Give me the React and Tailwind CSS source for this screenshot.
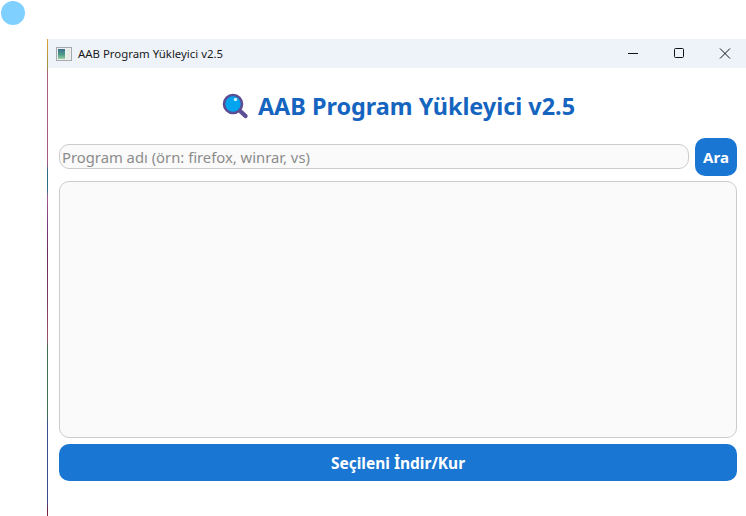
import React from 'react';

const uiFont = "font-['Noto_Sans','Open_Sans',sans-serif]";

const SearchGlyph = () => (
  <svg width="28" height="28" viewBox="0 0 28 28" className="shrink-0">
    <line x1="16.5" y1="16.5" x2="23.5" y2="23" stroke="#5c4d94" strokeWidth="4.4" strokeLinecap="round" />
    <circle cx="11" cy="11" r="9" fill="#00a4ef" stroke="#5c4d94" strokeWidth="2.6" />
    <circle cx="13.5" cy="6.5" r="1.8" fill="#c9eefc" />
  </svg>
);

const AppIcon = () => (
  <svg width="16" height="14" viewBox="0 0 16 14">
    <defs>
      <linearGradient id="appIconFill" x1="0" y1="0" x2="0" y2="1">
        <stop offset="0" stopColor="#3d6f8f" />
        <stop offset="0.6" stopColor="#4f9f8a" />
        <stop offset="1" stopColor="#9fd0a0" />
      </linearGradient>
    </defs>
    <rect x="0.5" y="0.5" width="15" height="13" fill="#eeeeee" stroke="#a3a9ad" />
    <rect x="2" y="2" width="7" height="10" fill="url(#appIconFill)" />
    <rect x="10" y="2" width="4" height="10" fill="#e6ede6" />
  </svg>
);

const TitleBar = () => (
  <div className="flex h-[29px] items-center bg-[#eef3fa] pl-[8px]">
    <AppIcon />
    <span className="ml-[6px] font-['Noto_Sans',sans-serif] text-[11.4px] leading-none text-[#1a1a1a]">AAB Program Yükleyici v2.5</span>
    <div className="ml-auto mr-[-2px] flex items-center">
      <svg width="46" height="29" viewBox="0 0 46 29">
        <line x1="18" y1="14.5" x2="28" y2="14.5" stroke="#111" />
      </svg>
      <svg width="46" height="29" viewBox="0 0 46 29">
        <rect x="18.5" y="9.5" width="9" height="9" rx="1" fill="none" stroke="#111" />
      </svg>
      <svg width="46" height="29" viewBox="0 0 46 29">
        <path d="M18 9.5 L28 19.5 M28 9.5 L18 19.5" stroke="#111" />
      </svg>
    </div>
  </div>
);

export default function App() {
  return (
    <div className={`relative h-[516px] w-[746px] overflow-hidden bg-white ${uiFont}`}>
      <div className="absolute left-[1px] top-[1px] h-[24px] w-[24px] rounded-full bg-[#80d0ff]" />
      <div className="absolute left-[47px] top-[39px] h-[477px] w-[699px] overflow-hidden bg-white pl-[1px]">
        {/* wallpaper showing through the window's left edge */}
        <div className="absolute top-0 bottom-0 left-0 w-[1px] bg-[linear-gradient(to_bottom,#e0a030_0px,#a09040_28px,#a8607f_34px,#a05a80_125px,#2a6a85_132px,#2a6a85_150px,#a05a90_158px,#7a3a80_185px,#6a2a60_215px,#7a3a60_265px,#a0506a_300px,#3f7050_308px,#3f7050_375px,#3a5090_384px,#3a4a90_462px,#7a2040_472px)]" />
        <TitleBar />
        <div className="flex flex-col px-[11px] pr-[9px]">
          <div className="flex h-[70px] items-center justify-center gap-[8px] pt-[7px] pl-[1px]">
            <SearchGlyph />
            <h1 className="text-[23.4px] leading-none font-bold text-[#1565c0]">AAB Program Yükleyici v2.5</h1>
          </div>
          <div className="flex items-center gap-[6px]">
            <input
              readOnly
              placeholder="Program adı (örn: firefox, winrar, vs)"
              className="mb-[1px] h-[25px] min-w-0 flex-1 rounded-[10px] border border-[#cccccc] bg-[#fafafa] px-[2px] text-[14.8px] outline-none placeholder:text-[#8c8c8c]"
            />
            <button className="h-[38px] w-[42px] rounded-[10px] bg-[#1976d2] text-[15px] font-bold text-white">Ara</button>
          </div>
          <div className="mt-[5px] h-[257px] rounded-[10px] border border-[#cccccc] bg-[#fafafa]" />
          <button className="mt-[6px] h-[37px] rounded-[10px] bg-[#1976d2] pt-[2px] text-[15.5px] font-bold text-white">Seçileni İndir/Kur</button>
        </div>
      </div>
    </div>
  );
}
